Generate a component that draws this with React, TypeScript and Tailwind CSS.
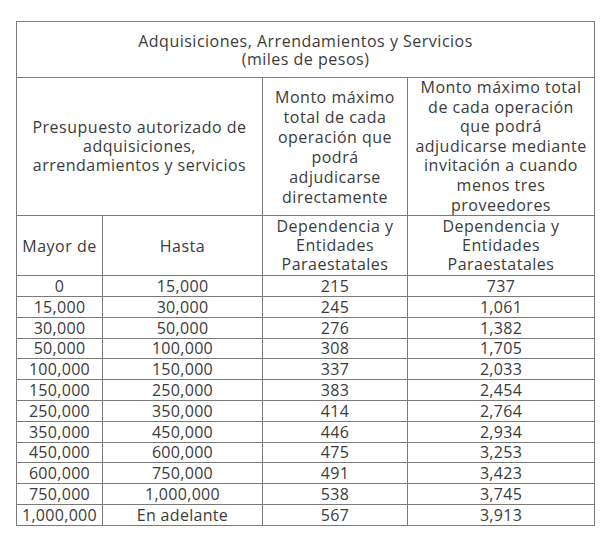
const rows: [string, string, string, string][] = [
  ["0", "15,000", "215", "737"],
  ["15,000", "30,000", "245", "1,061"],
  ["30,000", "50,000", "276", "1,382"],
  ["50,000", "100,000", "308", "1,705"],
  ["100,000", "150,000", "337", "2,033"],
  ["150,000", "250,000", "383", "2,454"],
  ["250,000", "350,000", "414", "2,764"],
  ["350,000", "450,000", "446", "2,934"],
  ["450,000", "600,000", "475", "3,253"],
  ["600,000", "750,000", "491", "3,423"],
  ["750,000", "1,000,000", "538", "3,745"],
  ["1,000,000", "En adelante", "567", "3,913"],
];

const cell = "border border-[#7a7a7a] text-center align-middle p-0 whitespace-nowrap";

export default function App() {
  return (
    <main className="min-h-screen w-[615px] h-[539px] bg-white pl-[16px] pt-[21px] font-['Open_Sans',sans-serif] text-[16px] text-[#3b3b3b] tracking-[0.5px]">
      <table className="table-fixed border-collapse w-[578px]">
        <colgroup>
          <col className="w-[86px]" />
          <col className="w-[160px]" />
          <col className="w-[145px]" />
          <col className="w-[187px]" />
        </colgroup>
        <tbody>
          <tr className="h-[56px]">
            <td colSpan={4} className={`${cell} leading-[18px]`}>
              Adquisiciones, Arrendamientos y Servicios
              <br />
              (miles de pesos)
            </td>
          </tr>
          <tr className="h-[138px]">
            <td colSpan={2} className={`${cell} leading-[19px]`}>
              Presupuesto autorizado de
              <br />
              adquisiciones,
              <br />
              arrendamientos y servicios
            </td>
            <td className={`${cell} leading-[20px]`}>
              Monto máximo
              <br />
              total de cada
              <br />
              operación que
              <br />
              podrá
              <br />
              adjudicarse
              <br />
              directamente
            </td>
            <td className={`${cell} leading-[19.6px]`}>
              Monto máximo total
              <br />
              de cada operación
              <br />
              que podrá
              <br />
              adjudicarse mediante
              <br />
              invitación a cuando
              <br />
              menos tres
              <br />
              proveedores
            </td>
          </tr>
          <tr className="h-[60px]">
            <td className={cell}>Mayor de</td>
            <td className={cell}>Hasta</td>
            <td className={`${cell} leading-[19px]`}>
              Dependencia y
              <br />
              Entidades
              <br />
              Paraestatales
            </td>
            <td className={`${cell} leading-[19px]`}>
              Dependencia y
              <br />
              Entidades
              <br />
              Paraestatales
            </td>
          </tr>
          {rows.map((r) => (
            <tr key={r[0]} className="h-[20.8px] leading-[18px] tracking-[0.3px]">
              {r.map((v, i) => (
                <td key={i} className={cell}>
                  {v}
                </td>
              ))}
            </tr>
          ))}
        </tbody>
      </table>
    </main>
  );
}
